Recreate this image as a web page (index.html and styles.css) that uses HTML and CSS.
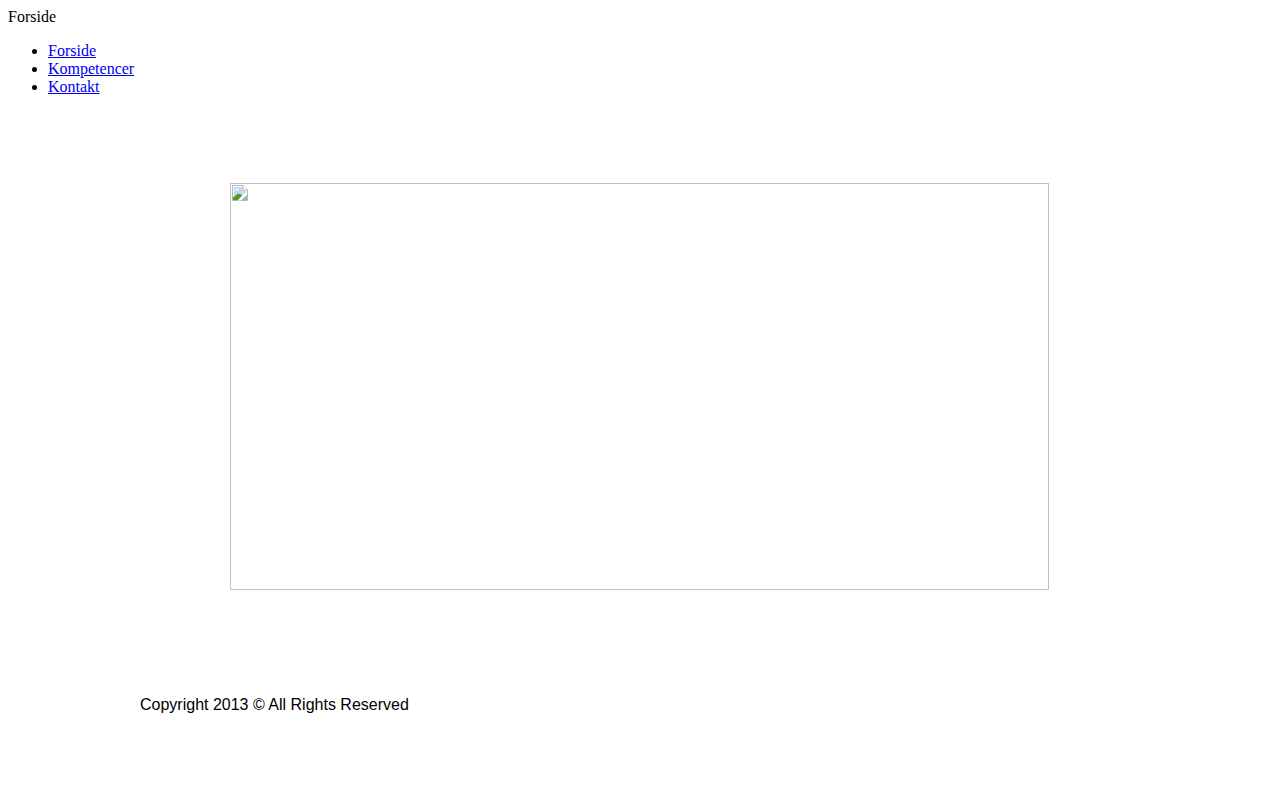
FILE: index.html
```html
<!DOCTYPE html>
<html lang="da">
<head>
<meta charset="utf-8">
<title>Forside</title>
<link rel="stylesheet" href="styles.css">
</head>
<body>
<div class="title">Forside</div>
<ul class="nav">
  <li><a href="#">Forside</a></li>
  <li><a href="#">Kompetencer</a></li>
  <li><a href="#">Kontakt</a></li>
</ul>
<div class="picture">
  <svg class="broken" width="16" height="16" viewBox="0 0 16 16" aria-hidden="true">
    <path d="M0.5 0.5H11L15.5 5V15.5H0.5Z" fill="#fff" stroke="#b4b4b4"/>
    <path d="M2 2H10.5V5.5H14V10L8 9L2 11Z" fill="#c5d8f2"/>
    <path d="M3 5.5a2 1.5 0 0 1 4 0Z" fill="#fff"/>
    <path d="M11 0.5V5H15.5" fill="#fff" stroke="#b4b4b4"/>
    <path d="M1 15V12.5L6 8.5L11 10L7 15Z" fill="#4c9f2c"/>
    <path d="M9 15L14.5 9.5L15 15Z" fill="#9dbb8d"/>
    <path d="M5.5 15.5L13 7.5L15 9.5L9 15.5Z" fill="#fff"/>
  </svg>
</div>
<div class="copyright">Copyright 2013 © All Rights Reserved</div>
</body>
</html>
```
FILE: styles.css
```css
body {
  margin: 8px;
  background: #fff;
  color: #000;
  font-family: "Liberation Serif", "Times New Roman", serif;
  font-size: 16px;
}

.nav {
  margin: 16px 0;
  padding-left: 40px;
}

.nav a {
  color: #00e;
}

.picture {
  box-sizing: border-box;
  width: 819px;
  height: 407px;
  margin: 87px 0 0 222px;
  padding: 1px;
  border: 1px solid #c0c0c0;
}

.broken {
  display: block;
}

.copyright {
  margin: 106px 0 0 132px;
  font-family: "Liberation Sans", Arial, sans-serif;
}
```
